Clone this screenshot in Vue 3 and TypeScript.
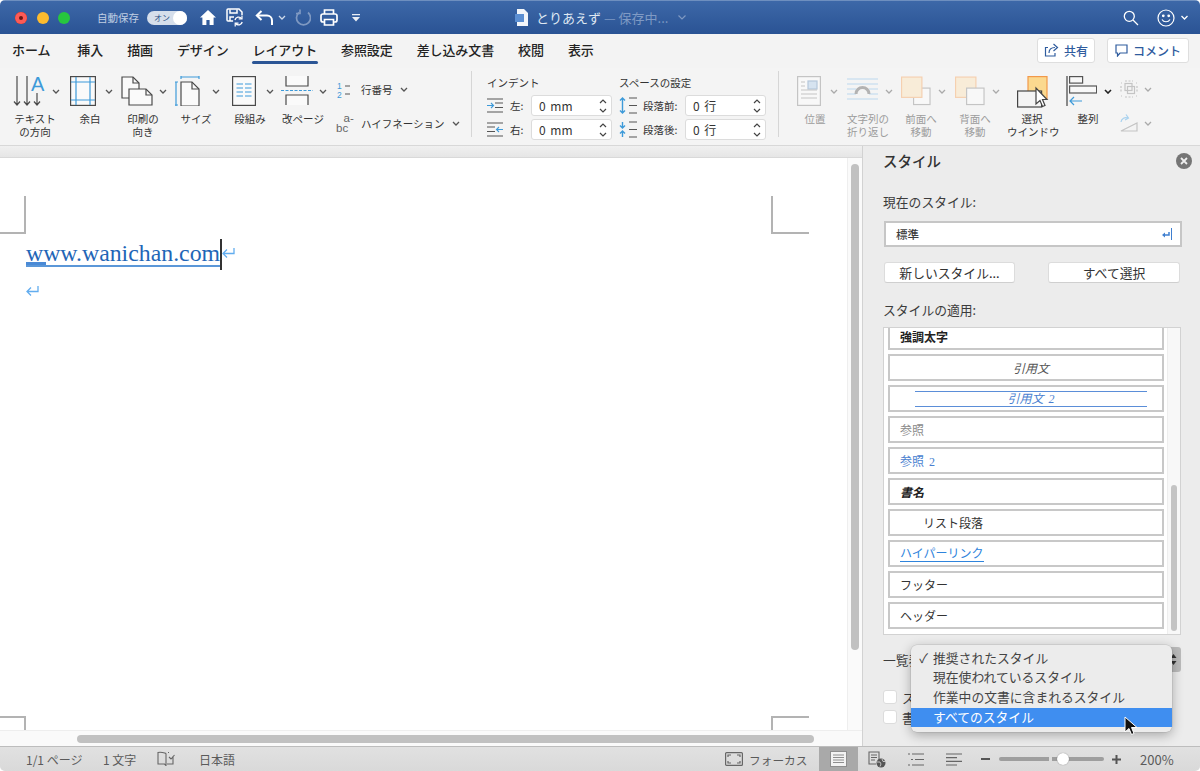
<script setup lang="ts">
// Word for Mac: レイアウト tab with the スタイル pane open
const styleItems = [
  { label: '強調太字', cls: 'st-bold' },
  { label: '引用文', cls: 'st-quote' },
  { label: '引用文 2', cls: 'st-quote2' },
  { label: '参照', cls: 'st-ref' },
  { label: '参照 2', cls: 'st-ref2' },
  { label: '書名', cls: 'st-book' },
  { label: 'リスト段落', cls: 'st-list' },
  { label: 'ハイパーリンク', cls: 'st-link' },
  { label: 'フッター', cls: 'st-plain' },
  { label: 'ヘッダー', cls: 'st-plain' },
]

const tabs = ['ホーム', '挿入', '描画', 'デザイン', 'レイアウト', '参照設定', '差し込み文書', '校閲', '表示']

const menuItems = [
  { label: '推奨されたスタイル', checked: true, active: false },
  { label: '現在使われているスタイル', checked: false, active: false },
  { label: '作業中の文書に含まれるスタイル', checked: false, active: false },
  { label: 'すべてのスタイル', checked: false, active: true },
]
</script>

<template>
  <div class="window">
    <header class="titlebar">
      <div class="lights">
        <span class="light red"></span>
        <span class="light yellow"></span>
        <span class="light green"></span>
      </div>
      <span class="autosave">自動保存</span>
      <span class="toggle"><span class="toggle-text">オン</span><span class="knob"></span></span>
      <svg class="qa qa-home" width="18" height="17" viewBox="0 0 18 17"><path d="M9 1 1 8.500h2.400V16h4v-5h3.200v5h4V8.500H17z" fill="#fff"/></svg>
      <svg class="qa qa-save" width="18" height="19" viewBox="0 0 18 19" fill="none" stroke="#fff" stroke-width="1.500"><path d="M9 13H2a1 1 0 0 1-1-1V2a1 1 0 0 1 1-1h11l3 3v3"/><path d="M4 1.500V5h7V1.500M4 13V9h4"/><circle cx="12.500" cy="13" r="5.500" fill="#31599b" stroke="none"/><path d="M9 12a3.700 3.700 0 0 1 6.500-1.500M16.200 14a3.700 3.700 0 0 1-6.500 1.500" stroke-width="1.300"/><path d="M16 7.500v3.300h-3.300M9.200 18.500v-3.300h3.300" stroke-width="1.200"/></svg>
      <svg class="qa qa-undo" width="19" height="16" viewBox="0 0 19 16" fill="none" stroke="#fff" stroke-width="2"><path d="M6.500 1 1.800 5.500l4.700 4.500"/><path d="M2 5.500h10a5 5 0 0 1 5 5V15"/></svg>
      <svg class="chev qa-undochev" width="8" height="5" viewBox="0 0 8 5"><path d="m1 1 3 3 3-3"/></svg>
      <svg class="qa qa-redo" width="16" height="17" viewBox="0 0 16 17" fill="none" stroke="#7f99c2" stroke-width="1.700"><path d="M4 3.500A7 7 0 1 0 13 3.500"/><path d="M5 .5v4H1"/></svg>
      <svg class="qa qa-print" width="18" height="17" viewBox="0 0 18 17" fill="none" stroke="#fff" stroke-width="1.700"><path d="M4.500 5V1h9v4"/><rect x="1" y="5" width="16" height="8" rx="2"/><path d="M4.500 10.500H13.500V16H4.500z" fill="#2f5a9c"/></svg>
      <svg class="qa qa-more" width="8" height="8" viewBox="0 0 8 8"><path d="M0 0h8v1.300H0zM0 3h8L4 7.500z" fill="#e8edf5"/></svg>

      <div class="doc-title">
        <svg width="14" height="17" viewBox="0 0 14 17"><path d="M2 0h7l4 4v13H2z" fill="#f2f5fa"/><rect x="0" y="5" width="9" height="8" fill="#5b8ed2"/></svg>
        <span class="doc-name">とりあえず</span>
        <span class="doc-state">— 保存中...</span>
        <svg width="8" height="5" viewBox="0 0 8 5" fill="none" stroke="#7f99c2" stroke-width="1.200"><path d="m.5.5 3.500 3.500L7.500.5"/></svg>
      </div>

      <div class="title-right">
        <svg width="16" height="16" viewBox="0 0 16 16" fill="none" stroke="#fff" stroke-width="1.300"><circle cx="6.300" cy="6.300" r="5"/><path d="m10 10 5 5"/></svg>
        <svg class="smile" width="18" height="18" viewBox="0 0 18 18" fill="none" stroke="#fff" stroke-width="1.200"><circle cx="9" cy="9" r="8"/><path d="M5 10.500c1.800 3 6.200 3 8 0"/><circle cx="6.300" cy="6.800" r=".8" fill="#fff"/><circle cx="11.700" cy="6.800" r=".8" fill="#fff"/></svg>
        <svg width="7" height="5" viewBox="0 0 7 5" fill="none" stroke="#fff" stroke-width="1.300"><path d="m.5 1 3 3 3-3"/></svg>
      </div>
    </header>

    <nav class="tabs">
      <span v-for="t in tabs" :key="t" class="tab" :class="{ active: t === 'レイアウト' }">{{ t }}</span>
      <div class="tab-actions">
        <button class="action share">
          <svg width="15" height="14" viewBox="0 0 15 14" fill="none" stroke="#2f5c9e" stroke-width="1.200"><path d="M4 4.500H1.500V13h9.500v-3"/><path d="M5 10c0-3.500 2.500-5.500 6-5.500M9.500 1l4 3.500-4 3.500"/></svg>
          <span>共有</span>
        </button>
        <button class="action comment">
          <svg width="13" height="13" viewBox="0 0 13 13" fill="none" stroke="#2f5c9e" stroke-width="1.200"><path d="M1 1h11v8H5l-2.500 3V9H1z"/></svg>
          <span>コメント</span>
        </button>
      </div>
    </nav>

    <section class="ribbon">
      <div class="item i-text">
        <div class="item-top">
          <svg width="34" height="30" viewBox="0 0 34 30" fill="none" stroke="#4a4a4a" stroke-width="1.200" overflow="visible">
            <path d="M2 0v29M-1 25.500 2 29l3-3.500M12 0v29M9 25.500l3 3.500 3-3.500M22 17v12M19 25.500l3 3.500 3-3.500"/>
            <text x="16" y="15" fill="#3d9ad9" stroke="none" font-size="20" font-family="Liberation Sans, sans-serif">A</text>
          </svg>
          <svg class="chev" width="8" height="5" viewBox="0 0 8 5"><path d="m1 1 3 3 3-3"/></svg>
        </div>
        <div class="item-label">テキスト<br>の方向</div>
      </div>

      <div class="item i-margin">
        <div class="item-top">
          <svg width="26" height="30" viewBox="0 0 26 30" fill="none">
            <rect x=".6" y=".6" width="24.800" height="28.800" fill="#fafafa" stroke="#4a4a4a" stroke-width="1.200"/>
            <path d="M6 1v28M20 1v28M1 6h24M1 24h24" stroke="#3d9ad9" stroke-width="1.200"/>
          </svg>
          <svg class="chev" width="8" height="5" viewBox="0 0 8 5"><path d="m1 1 3 3 3-3"/></svg>
        </div>
        <div class="item-label">余白</div>
      </div>

      <div class="item i-orient">
        <div class="item-top">
          <svg width="32" height="30" viewBox="0 0 32 30" fill="#fafafa" stroke="#4a4a4a" stroke-width="1.200">
            <path d="M1 1h11l6 6v15H1z"/><path d="M12 1v6h6" fill="none"/>
            <path d="M8 13h17l6 6v10H8z"/><path d="M25 13v6h6" fill="none"/>
          </svg>
          <svg class="chev" width="8" height="5" viewBox="0 0 8 5"><path d="m1 1 3 3 3-3"/></svg>
        </div>
        <div class="item-label">印刷の<br>向き</div>
      </div>

      <div class="item i-size">
        <div class="item-top">
          <svg width="25" height="30" viewBox="0 0 25 30" fill="none" stroke-width="1.200">
            <path d="M6 1h18M6 0v3M24 0v3M1 6v24M0 6h3M0 29h3" stroke="#3d9ad9"/>
            <path d="M6 6h11l7 7v17H6z" fill="#fafafa" stroke="#4a4a4a"/><path d="M17 6v7h7" stroke="#4a4a4a"/>
          </svg>
          <svg class="chev" width="8" height="5" viewBox="0 0 8 5"><path d="m1 1 3 3 3-3"/></svg>
        </div>
        <div class="item-label">サイズ</div>
      </div>

      <div class="item i-cols">
        <div class="item-top">
          <svg width="24" height="30" viewBox="0 0 24 30" fill="none">
            <rect x=".6" y=".6" width="22.800" height="28.800" fill="#fafafa" stroke="#4a4a4a" stroke-width="1.200"/>
            <path d="M4.500 8h6.500M13 8h6.500M4.500 12h6.500M13 12h6.500M4.500 16h6.500M13 16h6.500M4.500 20h6.500M13 20h6.500" stroke="#3d9ad9" stroke-width="1.200"/>
          </svg>
          <svg class="chev" width="8" height="5" viewBox="0 0 8 5"><path d="m1 1 3 3 3-3"/></svg>
        </div>
        <div class="item-label">段組み</div>
      </div>

      <div class="item i-break">
        <div class="item-top">
          <svg width="32" height="30" viewBox="0 0 32 30" fill="none">
            <path d="M5 0v10h22V0M5 29V19h22v10" stroke="#4a4a4a" stroke-width="1.200" fill="#fafafa"/>
            <path d="M0 14.500h32" stroke="#3d9ad9" stroke-width="1.200" stroke-dasharray="3 1.500"/>
          </svg>
          <svg class="chev" width="8" height="5" viewBox="0 0 8 5"><path d="m1 1 3 3 3-3"/></svg>
        </div>
        <div class="item-label">改ページ</div>
      </div>

      <div class="small-col">
        <div class="small-row row-top">
          <svg width="15" height="17" viewBox="0 0 15 17"><text x="0" y="8" font-size="8.500" fill="#3d9ad9" font-family="Liberation Sans, sans-serif">1</text><text x="0" y="16.500" font-size="8.500" fill="#3d9ad9" font-family="Liberation Sans, sans-serif">2</text><path d="M8 5h5M8 13h5" stroke="#555" stroke-width="1.100"/></svg>
          <span class="small-text">行番号</span>
          <svg class="chev" width="8" height="5" viewBox="0 0 8 5"><path d="m1 1 3 3 3-3"/></svg>
        </div>
        <div class="small-row">
          <svg width="15" height="18" viewBox="0 0 15 18" fill="#666" font-size="11.500" font-family="Liberation Sans, sans-serif" overflow="visible"><text x="6.500" y="8">a-</text><text x="-1" y="18">bc</text></svg>
          <span class="small-text">ハイフネーション</span>
          <svg class="chev" width="8" height="5" viewBox="0 0 8 5"><path d="m1 1 3 3 3-3"/></svg>
        </div>
      </div>

      <div class="sep"></div>

      <div class="para-grid">
        <div class="para-head">インデント</div>
        <div class="para-head">スペースの設定</div>

        <div class="para-row">
          <svg class="para-ic" width="16" height="15" viewBox="0 0 16 15" fill="none" stroke="#555" stroke-width="1.100"><path d="M0 1h16M8 5h8M8 9.500h8M0 14h16"/><path d="M0 7.500h6M4 5l2.500 2.500L4 10" stroke="#3d9ad9"/></svg>
          <label class="lab-a">左:</label>
          <div class="spin"><span>0 mm</span><svg width="8" height="16" viewBox="0 0 8 16" fill="none" stroke="#444" stroke-width="1.200"><path d="m1 5 3-3 3 3M1 11l3 3 3-3"/></svg></div>
        </div>
        <div class="para-row">
          <svg class="para-ic sp" width="18" height="17" viewBox="0 0 18 17" fill="none" stroke="#555" stroke-width="1.100"><path d="M10 1h8M10 8.500h8M10 16h8"/><path d="M3.500 1v15M1 3.500 3.500 1 6 3.500M1 13.500 3.500 16 6 13.500" stroke="#3d9ad9" stroke-width="1.400"/></svg>
          <label class="lab-b">段落前:</label>
          <div class="spin"><span>0 行</span><svg width="8" height="16" viewBox="0 0 8 16" fill="none" stroke="#444" stroke-width="1.200"><path d="m1 5 3-3 3 3M1 11l3 3 3-3"/></svg></div>
        </div>
        <div class="para-row">
          <svg class="para-ic" width="16" height="15" viewBox="0 0 16 15" fill="none" stroke="#555" stroke-width="1.100"><path d="M0 1h16M0 5h8M0 9.500h8M0 14h16"/><path d="M16 7.500h-6M12 5 9.500 7.500 12 10" stroke="#3d9ad9"/></svg>
          <label class="lab-a">右:</label>
          <div class="spin"><span>0 mm</span><svg width="8" height="16" viewBox="0 0 8 16" fill="none" stroke="#444" stroke-width="1.200"><path d="m1 5 3-3 3 3M1 11l3 3 3-3"/></svg></div>
        </div>
        <div class="para-row">
          <svg class="para-ic sp" width="18" height="17" viewBox="0 0 18 17" fill="none" stroke="#555" stroke-width="1.100"><path d="M10 1h8M10 8.500h8M10 16h8"/><path d="M3.500 1v6M1 4.500 3.500 7 6 4.500M3.500 10v6M1 12.500 3.500 10 6 12.500" stroke="#3d9ad9" stroke-width="1.400"/></svg>
          <label class="lab-b">段落後:</label>
          <div class="spin"><span>0 行</span><svg width="8" height="16" viewBox="0 0 8 16" fill="none" stroke="#444" stroke-width="1.200"><path d="m1 5 3-3 3 3M1 11l3 3 3-3"/></svg></div>
        </div>
      </div>

      <div class="sep sep2"></div>

      <div class="item d i-pos">
        <div class="item-top">
          <svg width="24" height="30" viewBox="0 0 24 30" fill="none" stroke="#c4c4c4" stroke-width="1.200">
            <rect x=".6" y=".6" width="22.800" height="28.800" fill="#f8f8f8"/>
            <rect x="11" y="5" width="9" height="8" fill="#d6e3f0" stroke="#b5c7db"/>
            <path d="M4 6h4M4 10h4M4 14h16M4 18h16M4 22h16"/>
          </svg>
          <svg class="chev" width="8" height="5" viewBox="0 0 8 5"><path d="m1 1 3 3 3-3"/></svg>
        </div>
        <div class="item-label">位置</div>
      </div>

      <div class="item d i-wrap">
        <div class="item-top">
          <svg width="31" height="30" viewBox="0 0 31 30" fill="none" stroke="#bcd7ee" stroke-width="1.200">
            <path d="M0 3h31M0 8h31M0 13h9M22 13h9M0 18h9M22 18h9M0 23h31"/>
            <path d="M9 18a6.500 6.500 0 0 1 13 0" stroke="#b3b3b3" stroke-width="3"/>
          </svg>
          <svg class="chev" width="8" height="5" viewBox="0 0 8 5"><path d="m1 1 3 3 3-3"/></svg>
        </div>
        <div class="item-label">文字列の<br>折り返し</div>
      </div>

      <div class="item d i-front">
        <div class="item-top">
          <svg width="31" height="30" viewBox="0 0 31 30" stroke-width="1.200">
            <rect x="13" y="12" width="17" height="17" fill="#f8f8f8" stroke="#c4c4c4"/>
            <rect x=".6" y=".6" width="21" height="21" fill="#f8ecd8" stroke="#f5d0b0"/>
          </svg>
          <svg class="chev" width="8" height="5" viewBox="0 0 8 5"><path d="m1 1 3 3 3-3"/></svg>
        </div>
        <div class="item-label">前面へ<br>移動</div>
      </div>

      <div class="item d i-front">
        <div class="item-top">
          <svg width="31" height="30" viewBox="0 0 31 30" stroke-width="1.200">
            <rect x=".6" y=".6" width="21" height="21" fill="#f8ecd8" stroke="#f5d0b0"/>
            <rect x="12" y="12" width="18" height="17" fill="#f8f8f8" stroke="#c4c4c4"/>
          </svg>
          <svg class="chev" width="8" height="5" viewBox="0 0 8 5"><path d="m1 1 3 3 3-3"/></svg>
        </div>
        <div class="item-label">背面へ<br>移動</div>
      </div>

      <div class="item i-select">
        <div class="item-top">
          <svg width="34" height="33" viewBox="0 0 34 33" stroke-width="1.200">
            <rect x="11" y=".6" width="19" height="22" fill="#fbd98f" stroke="#f2994a"/>
            <rect x=".6" y="15" width="24" height="16" fill="#f4f4f4" stroke="#444"/>
            <path d="M19 12v16l4-3.500 2.500 6 2.500-1-2.500-6H30z" fill="#fff" stroke="#444"/>
          </svg>
        </div>
        <div class="item-label">選択<br>ウインドウ</div>
      </div>

      <div class="item i-align">
        <div class="item-top">
          <svg width="31" height="30" viewBox="0 0 31 30" fill="none" stroke-width="1.200">
            <path d="M1 0v30" stroke="#666" stroke-width="1.500"/>
            <rect x="3.600" y=".6" width="13" height="6.500" fill="#f8f8f8" stroke="#555"/>
            <rect x="3.600" y="10" width="27" height="7" fill="#f8f8f8" stroke="#555"/>
            <path d="M16 25H4M8 21l-4 4 4 4" stroke="#3d9ad9"/>
          </svg>
          <svg class="chev dark" width="8" height="5" viewBox="0 0 8 5"><path d="m1 1 3 3 3-3"/></svg>
        </div>
        <div class="item-label">整列</div>
      </div>

      <div class="small-col arrange">
        <div class="small-row row-top">
          <svg width="18" height="18" viewBox="0 0 18 18" fill="none" stroke="#c4c4c4" stroke-width="1.200"><path d="M1 3h1M16 3h1M1 16h1M16 16h1M5 1h8M5 17h8M1 6v7M17 6v7" stroke-dasharray="2 1.500"/><rect x="5" y="3.500" width="7" height="7"/><rect x="7.500" y="6.500" width="7" height="7"/></svg>
          <svg class="chev faint" width="8" height="5" viewBox="0 0 8 5"><path d="m1 1 3 3 3-3"/></svg>
        </div>
        <div class="small-row">
          <svg width="18" height="18" viewBox="0 0 18 18" fill="none" stroke-width="1.200"><path d="M1 17 17 9v8z" stroke="#c4c4c4"/><path d="M1 8a5 5 0 0 1 7-4M6 .5 8.500 4 5 6" stroke="#a9d2ef"/></svg>
          <svg class="chev faint" width="8" height="5" viewBox="0 0 8 5"><path d="m1 1 3 3 3-3"/></svg>
        </div>
      </div>
    </section>

    <main class="main">
      <div class="doc-column">
        <div class="doc-top"></div>
        <div class="doc-middle">
          <div class="page">
            <i class="crop tl"></i>
            <i class="crop tr"></i>
            <i class="crop bl"></i>
            <i class="crop br"></i>
            <p class="line first"><span class="link">www.wanichan.com</span><span class="caret"></span><svg class="ret" width="13" height="11" viewBox="0 0 13 11" fill="none" stroke="#62adef" stroke-width="1.300"><path d="M12 0v5.500H1M5 1.500 1 5.500l4 4"/></svg></p>
            <p class="line second"><svg class="ret" width="13" height="11" viewBox="0 0 13 11" fill="none" stroke="#62adef" stroke-width="1.300"><path d="M12 0v5.500H1M5 1.500 1 5.500l4 4"/></svg></p>
          </div>
          <div class="vscroll"><div class="vthumb"></div></div>
        </div>
        <div class="hscroll"><div class="hthumb"></div></div>
      </div>

      <aside class="panel">
        <div class="panel-head">
          <h2>スタイル</h2>
          <svg width="16" height="16" viewBox="0 0 16 16"><circle cx="8" cy="8" r="8" fill="#757575"/><path d="m5 5 6 6M11 5l-6 6" stroke="#eee" stroke-width="1.800"/></svg>
        </div>
        <div class="panel-label current">現在のスタイル:</div>
        <div class="current-box">
          <span>標準</span>
          <svg width="10" height="12" viewBox="0 0 10 12" fill="none" stroke="#3f7fd0"><path d="M9.500 0v12" stroke-width="1"/><path d="M7 4v3H2" stroke-width="1.500"/><path d="M0 7l3-2.500v5z" fill="#3f7fd0" stroke="none"/></svg>
        </div>
        <div class="panel-buttons">
          <button>新しいスタイル...</button>
          <button class="all">すべて選択</button>
        </div>
        <div class="panel-label apply">スタイルの適用:</div>
        <div class="style-list">
          <div class="style-items">
            <div v-for="s in styleItems" :key="s.label" class="style-item" :class="s.cls"><span>{{ s.label }}</span></div>
          </div>
          <div class="list-scroll"><div class="list-thumb"></div></div>
        </div>
        <div class="filter-row">
          <span>一覧表示:</span>
          <div class="stepper"><svg width="7" height="13" viewBox="0 0 7 13"><path d="M.5 5 3.500 1l3 4zM.5 8l3 4 3-4z" fill="#333"/></svg></div>
        </div>
        <label class="check first-check"><i></i><span>スタイル ガイド</span></label>
        <label class="check"><i></i><span>書式 ガイド</span></label>

        <div class="popup">
          <div v-for="m in menuItems" :key="m.label" class="popup-item" :class="{ active: m.active }">
            <span class="tick">{{ m.checked ? '✓' : '' }}</span>{{ m.label }}
          </div>
        </div>
        <svg class="cursor" width="14" height="20" viewBox="0 0 14 20"><path d="M1 1v15l4-3.500 2.500 6 2.500-1-2.500-6H13z" fill="#111" stroke="#fff" stroke-width="1"/></svg>
      </aside>
    </main>

    <footer class="status">
      <span class="st page-count">1/1 ページ</span>
      <span class="st char-count">1 文字</span>
      <svg class="book" width="18" height="16" viewBox="0 0 18 16" fill="none" stroke="#666" stroke-width="1.100"><path d="M9 2.500C8 1.500 3 1 1 1.500V13h6.500L9 14.500M9 2.500V15M11 1.500h1M16 5v8h-6M12 6l2 2 3.500-4"/></svg>
      <span class="st lang">日本語</span>
      <svg class="focus-ic" width="18" height="14" viewBox="0 0 18 14" fill="none" stroke="#666" stroke-width="1.200"><rect x=".6" y=".6" width="16.800" height="12.800" rx="1"/><path d="M3 5V3h3M15 5V3h-3M3 9v2h3M15 9v2h-3"/></svg>
      <span class="st focus">フォーカス</span>
      <div class="view-active"><svg width="17" height="16" viewBox="0 0 17 16" fill="#f3f3f3" stroke="#8e8e8e" stroke-width="1"><rect x=".5" y=".5" width="16" height="15"/><path d="M3 4h11M3 6.500h11M3 9h11M3 11.500h11" fill="none"/></svg></div>
      <svg class="v-web" width="18" height="17" viewBox="0 0 18 17" fill="none" stroke="#666" stroke-width="1.100"><path d="M11 9V1H1v12h7M3 4h6M3 6.500h6M3 9h4"/><circle cx="13" cy="12" r="4.500" fill="#555" stroke="none"/><path d="M9 11h3l1 2-1 2.500M14 8l1 2.500h2.500" stroke="#ddd" stroke-width=".8"/></svg>
      <svg class="v-out" width="16" height="13" viewBox="0 0 16 13" stroke="#666" stroke-width="1.200"><path d="M0 1h2M4 1h12M3 6.500h2M7 6.500h9M0 12h2M4 12h12"/></svg>
      <svg class="v-draft" width="16" height="13" viewBox="0 0 16 13" stroke="#666" stroke-width="1.200"><path d="M0 1h16M0 4.700h11M0 8.300h16M0 12h11"/></svg>
      <span class="zoom-minus"></span>
      <div class="slider"><i class="tick-mark"></i><i class="slider-knob"></i></div>
      <svg class="plus" width="9" height="9" viewBox="0 0 9 9" stroke="#555" stroke-width="2"><path d="M0 4.500h9M4.500 0v9"/></svg>
      <span class="st percent">200%</span>
    </footer>
  </div>
</template>

<style>
html, body { margin: 0; background: #fff; }
</style>

<style scoped>
.window {
  position: relative;
  width: 1200px;
  height: 771px;
  display: flex;
  flex-direction: column;
  overflow: hidden;
  border-radius: 5px;
  background: #f3f3f3;
  font-family: "Noto Sans CJK JP", "Liberation Sans", sans-serif;
  color: #333;
}

/* title bar */
.titlebar {
  height: 34px;
  flex: none;
  box-sizing: border-box;
  display: flex;
  align-items: center;
  background: linear-gradient(#3d68a8, #2a5394);
  border-top: 1px solid #6e8fbf;
}
.lights { display: flex; gap: 9.5px; margin-left: 15px; }
.light { width: 12px; height: 12px; border-radius: 50%; }
.red { background: #fc5b57; box-shadow: inset 0 0 0 4px #fc5b57, inset 0 0 0 6px #6e1512; }
.yellow { background: #fdbb2e; }
.green { background: #27c63f; }
.autosave { margin-left: 27px; font-size: 10.5px; color: #c0cee3; width: 50px; }
.toggle {
  width: 40px;
  height: 14px;
  border-radius: 7px;
  background: #d5deeb;
  display: flex;
  align-items: center;
  justify-content: space-between;
  padding-left: 7px;
  box-sizing: border-box;
}
.toggle-text { font-size: 8px; color: #2d4f86; }
.knob { width: 14px; height: 14px; border-radius: 50%; background: #fff; }
.qa { flex: none; }
.qa-home { margin-left: 12px; }
.qa-save { margin-left: 9px; }
.qa-undo { margin-left: 11px; }
.titlebar .qa-undochev { margin-left: 4px; stroke: #cfdaea; }
.qa-redo { margin-left: 9px; }
.qa-print { margin-left: 9px; }
.qa-more { margin-left: 14px; }
.doc-title { margin-left: 155px; display: flex; align-items: center; font-size: 13px; }
.doc-name { margin-left: 7px; color: #dfe7f2; }
.doc-state { margin-left: 3px; color: #7f9ac4; width: 74px; }
.title-right { margin-left: auto; margin-right: 12px; display: flex; align-items: center; }
.smile { margin-left: 18px; margin-right: 6px; }

/* tabs */
.tabs {
  height: 34px;
  flex: none;
  display: flex;
  align-items: center;
  gap: 24px;
  padding: 0 0 2px 12px;
  box-sizing: border-box;
}
.tab { position: relative; font-size: 13px; font-weight: 500; color: #222; letter-spacing: -.1px; line-height: 18px; }
.tab:first-child { margin-right: 3px; }
.tab.active::after {
  content: "";
  position: absolute;
  left: -1px;
  right: -1px;
  bottom: -5px;
  height: 3px;
  border-radius: 2px;
  background: #2b5595;
}
.tab-actions { margin-left: auto; margin-right: 11px; display: flex; gap: 12px; }
.action {
  height: 25px;
  box-sizing: border-box;
  display: flex;
  align-items: center;
  justify-content: center;
  gap: 5px;
  background: #fff;
  border: 1px solid #dedede;
  border-radius: 3px;
  font: 500 12px "Noto Sans CJK JP", sans-serif;
  color: #2f5c9e;
  padding: 0;
}
.share { width: 58px; }
.comment { width: 82px; }

/* ribbon */
.ribbon {
  height: 78px;
  flex: none;
  box-sizing: border-box;
  display: flex;
  padding-left: 8px;
  border-bottom: 1px solid #d8d8d8;
  background: #f4f4f4;
}
.item { flex: none; padding-top: 8px; }
.item-top { height: 30px; display: flex; align-items: center; box-sizing: border-box; }
.item-label { margin-top: 6px; font-size: 10.5px; line-height: 13px; text-align: center; color: #333; white-space: nowrap; }
.chev { flex: none; fill: none; stroke: #555; stroke-width: 1.300; }
.chev.dark { stroke: #222; stroke-width: 1.600; }
.chev.faint { stroke: #aaa; }
.d .item-label { color: #9c9c9c; }
.d .chev { stroke: #aaa; }

.i-text { width: 54px; margin-right: 2px; }
.i-text .item-top { padding-left: 7px; gap: 3px; }
.i-margin { width: 52px; margin-right: 1px; }
.i-margin .item-top { padding-left: 6px; gap: 9px; }
.i-orient { width: 52px; margin-right: 1px; }
.i-orient .item-top { padding-left: 4px; gap: 6px; }
.i-size { width: 52px; margin-right: 2px; }
.i-size .item-top { padding-left: 5px; gap: 12px; }
.i-cols { width: 52px; margin-right: 1px; }
.i-cols .item-top { padding-left: 8px; gap: 10px; }
.i-break { width: 52px; }
.i-break .item-top { padding-left: 4px; gap: 6px; }

.small-col { width: 134px; margin-left: 8px; flex: none; }
.small-row { height: 18px; display: flex; align-items: center; }
.row-top { margin-top: 12px; margin-bottom: 16px; }
.small-text { margin-left: 9px; margin-right: 6px; font-size: 10.5px; color: #333; }
.small-row .small-text + .chev { margin-left: 1px; }

.sep { width: 1px; height: 66px; margin-top: 3px; background: #d6d6d6; flex: none; }
.sep2 { margin-left: 12px; margin-right: 11px; }

.para-grid {
  margin-left: 15px;
  flex: none;
  display: grid;
  grid-template-columns: 125px 147px;
  grid-template-rows: 24px 21px 21px;
  column-gap: 7px;
  row-gap: 3px;
}
.para-head { font-size: 10.5px; padding-top: 7px; line-height: 16px; color: #333; }
.para-row { display: flex; align-items: center; font-size: 10.5px; }
.para-ic { flex: none; }
.lab-a { margin-left: 7px; width: 21px; flex: none; }
.lab-b { margin-left: 6px; width: 42px; flex: none; }
.spin {
  width: 81px;
  height: 21px;
  box-sizing: border-box;
  display: flex;
  align-items: center;
  justify-content: space-between;
  padding: 0 4px 0 7px;
  background: #fff;
  border: 1px solid #dcdcdc;
  border-radius: 3px;
  font-size: 12px;
  word-spacing: 2px;
  color: #333;
}

.i-pos { width: 50px; margin-right: 3px; }
.i-pos .item-top { padding-left: 7px; gap: 9px; }
.i-wrap { width: 50px; margin-right: 3px; }
.i-wrap .item-top { padding-left: 4px; gap: 7px; }
.i-front { width: 50px; margin-right: 4px; }
.i-front .item-top { padding-left: 5px; gap: 7px; }
.i-select { width: 50px; margin-left: 3px; margin-right: 6px; }
.i-select .item-top { padding-left: 10px; padding-top: 3px; }
.i-align { width: 50px; }
.i-align .item-top { padding-left: 3px; gap: 7px; }
.arrange { width: 40px; margin-left: 7px; }
.arrange .chev { margin-left: 6px; }

/* document */
.main { flex: 1; min-height: 0; display: flex; position: relative; }
.doc-column { width: 863px; flex: none; display: flex; flex-direction: column; border-right: 1px solid #d2d2d2; box-sizing: border-box; }
.doc-top { height: 12px; flex: none; background: linear-gradient(#f0f0f0, #e6e6e6); border-bottom: 1px solid #d9d9d9; box-sizing: border-box; }
.doc-middle { flex: 1; min-height: 0; display: flex; }
.page { position: relative; flex: 1; background: #fff; }
.crop { position: absolute; width: 36px; border: 0 solid #b3b3b3; }
.tl { left: -12px; top: 38px; height: 36px; border-right-width: 2px; border-bottom-width: 2px; }
.tr { left: 771px; top: 38px; height: 36px; border-left-width: 2px; border-bottom-width: 2px; }
.bl { left: -12px; bottom: 0; height: 12px; border-right-width: 2px; border-top-width: 2px; }
.br { left: 771px; bottom: 0; height: 12px; border-left-width: 2px; border-top-width: 2px; }
.line { margin: 0; padding-left: 26px; display: flex; align-items: center; }
.line.first { margin-top: 81px; height: 31px; position: relative; }
.line.second { margin-top: 18px; }
.link {
  position: relative;
  font: 23.800px/27px "Liberation Serif", serif;
  color: #1f66b7;
  border-bottom: 2px solid #5b97d8;
  height: 25px;
  margin-top: -2px;
  white-space: nowrap;
}
.link::after { content: ""; position: absolute; left: 0; bottom: 0; width: 20px; height: 3px; background: #4a8ad6; }
.caret { width: 1.500px; height: 31px; background: #333; flex: none; }
.ret { flex: none; margin-top: -2px; }
.vscroll { width: 15px; flex: none; background: #fafafa; border-left: 1px solid #eee; box-sizing: border-box; padding: 6px 0 0 3px; }
.vthumb { width: 8px; height: 486px; border-radius: 4px; background: #c1c1c1; }
.hscroll { height: 16px; flex: none; background: #fafafa; border-top: 1px solid #eee; box-sizing: border-box; padding: 4px 0 0 77px; }
.hthumb { width: 737px; height: 8px; border-radius: 4px; background: #c1c1c1; }

/* styles pane */
.panel { position: relative; flex: 1; background: #ececec; padding: 0 18px 0 20px; font-size: 12.800px; color: #3c3c3c; }
.panel-head { height: 30px; display: flex; align-items: center; justify-content: space-between; margin-right: -10px; }
.panel-head h2 { margin: 0; font-size: 14.500px; font-weight: 500; color: #333; position: relative; top: -1px; }
.panel-label { line-height: 18px; }
.current { margin-top: 17px; }
.current-box {
  margin-top: 10px;
  margin-left: 1px;
  width: 298px;
  height: 26px;
  box-sizing: border-box;
  background: #fff;
  border: 2px solid #c6c6c6;
  display: flex;
  align-items: center;
  justify-content: space-between;
  padding: 0 8px 0 10px;
  font-size: 11.500px;
  font-weight: 500;
}
.panel-buttons { margin-top: 15px; margin-left: 1px; width: 296px; display: flex; justify-content: space-between; }
.panel-buttons button {
  width: 131px;
  height: 21px;
  padding: 0;
  background: #fff;
  border: 1px solid #dcdcdc;
  border-bottom-color: #cfcfcf;
  border-radius: 3px;
  font: 12.800px "Noto Sans CJK JP", sans-serif;
  color: #333;
}
.panel-buttons .all { width: 132px; }
.apply { margin-top: 18px; }
.style-list {
  margin-top: 8px;
  width: 298px;
  height: 308px;
  box-sizing: border-box;
  border: 1px solid #d2d2d2;
  background: #fff;
  display: flex;
  overflow: hidden;
}
.style-items { flex: 1; margin-top: -5px; padding: 0 3px 0 4px; display: flex; flex-direction: column; gap: 4px; }
.style-item {
  height: 27px;
  flex: none;
  box-sizing: border-box;
  border: 2px solid #c8c8c8;
  display: flex;
  align-items: center;
  padding-left: 10px;
  font-family: "Liberation Serif", "Noto Sans CJK JP", serif;
  font-size: 12px;
  word-spacing: 2px;
  color: #333;
}
.st-bold { font-weight: 700; color: #222; }
.st-quote { justify-content: center; font-style: italic; color: #555; padding-left: 10px; }
.st-quote2 { justify-content: center; padding: 0 0 0 10px; font-style: italic; color: #4a7fd0; }
.st-quote2 span { width: 232px; text-align: center; border-top: 1px solid #5b8ed8; border-bottom: 1px solid #5b8ed8; line-height: 14px; }
.st-ref { color: #8a8a8a; }
.st-ref2 { color: #4a7fd0; }
.st-book { font-weight: 700; font-style: italic; color: #222; }
.st-list { padding-left: 33px; }
.st-link span { color: #2f84dc; border-bottom: 1px solid #2f84dc; line-height: 14px; margin-top: 2px; }
.list-scroll { width: 13px; flex: none; background: #f8f8f8; border-left: 1px solid #eee; box-sizing: border-box; padding: 157px 0 0 3px; }
.list-thumb { width: 6px; height: 146px; border-radius: 3px; background: #c4c4c4; }
.filter-row { margin-top: 12px; height: 25px; width: 298px; display: flex; align-items: center; justify-content: space-between; }
.stepper { width: 16px; height: 25px; box-sizing: border-box; background: #bbb; border-radius: 3px; display: flex; align-items: center; justify-content: center; }
.check { display: flex; align-items: center; gap: 5px; height: 14px; }
.check i { width: 14px; height: 14px; box-sizing: border-box; background: #fff; border: 1px solid #dcdcdc; border-radius: 3px; flex: none; }
.first-check { margin-top: 18px; margin-bottom: 6px; }
.popup {
  position: absolute;
  left: 48px;
  top: 499px;
  width: 261px;
  height: 87px;
  box-sizing: border-box;
  padding-top: 4px;
  background: #ececec;
  border-radius: 6px;
  box-shadow: 0 3px 12px rgba(0, 0, 0, .3), 0 0 0 .5px rgba(0, 0, 0, .12);
  font-size: 12.800px;
  color: #444;
}
.popup-item { height: 19.300px; line-height: 18px; display: flex; white-space: pre; }
.popup-item.active { background: #3f8ef0; color: #fff; margin-top: 1px; line-height: 17px; }
.tick { width: 22px; text-align: right; padding-right: 5px; box-sizing: border-box; flex: none; }
.cursor { position: absolute; left: 261px; top: 570px; }

/* status bar */
.status {
  height: 25px;
  flex: none;
  box-sizing: border-box;
  display: flex;
  align-items: center;
  background: linear-gradient(#e1e1e1, #d9d9d9);
  border-top: 1px solid #bdbdbd;
  color: #5a5a5a;
}
.st { font-size: 12px; white-space: nowrap; }
.page-count { margin-left: 26px; width: 77px; }
.char-count { width: 54px; }
.lang { margin-left: 24px; width: 526px; }
.focus-ic { flex: none; }
.focus { margin-left: 6px; width: 70px; font-size: 11.700px; }
.view-active { width: 39px; height: 25px; flex: none; background: #a9a9a9; display: flex; align-items: center; justify-content: center; }
.v-web { margin-left: 10px; flex: none; }
.v-out { margin-left: 22px; flex: none; }
.v-draft { margin-left: 22px; flex: none; }
.zoom-minus { margin-left: 19px; width: 9px; height: 2px; background: #555; flex: none; }
.slider { position: relative; margin-left: 9px; width: 105px; height: 4px; border-radius: 2px; background: #9e9e9e; flex: none; }
.tick-mark { position: absolute; left: 50px; top: 0; width: 3px; height: 4px; background: #ddd; }
.slider-knob { position: absolute; left: 58px; top: -4px; width: 12px; height: 12px; border-radius: 50%; background: #fff; box-shadow: 0 0 1px rgba(0, 0, 0, .5); }
.plus { margin-left: 8px; flex: none; }
.percent { margin-left: 19px; font-size: 13px; }
</style>
